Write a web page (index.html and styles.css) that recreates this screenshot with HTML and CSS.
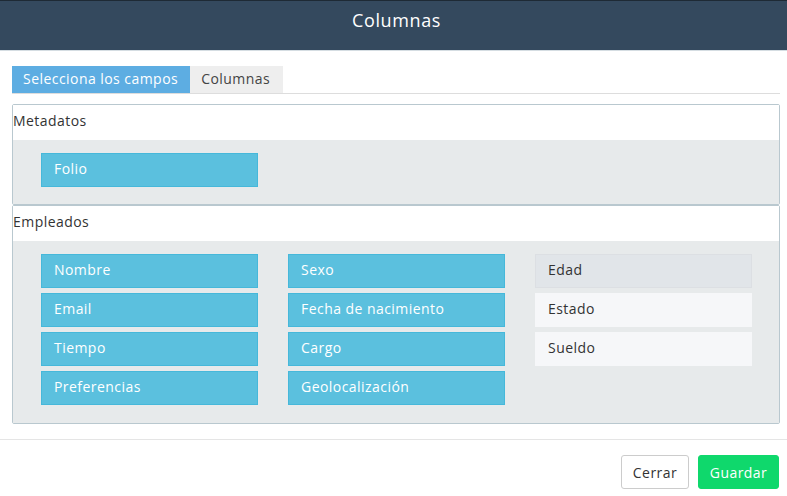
FILE: index.html
```html
<!DOCTYPE html>
<html lang="es">
<head>
<meta charset="utf-8">
<title>Columnas</title>
<link rel="stylesheet" href="styles.css">
</head>
<body>
<div class="modal">
  <header class="modal-header">
    <h1 class="modal-title">Columnas</h1>
  </header>
  <div class="modal-body">
    <ul class="tabs">
      <li class="tab active">Selecciona los campos</li>
      <li class="tab">Columnas</li>
    </ul>
    <section class="panel">
      <div class="panel-heading">Metadatos</div>
      <div class="panel-body">
        <div class="col">
          <div class="field on">Folio</div>
        </div>
      </div>
    </section>
    <section class="panel panel-last">
      <div class="panel-heading">Empleados</div>
      <div class="panel-body">
        <div class="col">
          <div class="field on">Nombre</div>
          <div class="field on">Email</div>
          <div class="field on">Tiempo</div>
          <div class="field on">Preferencias</div>
        </div>
        <div class="col">
          <div class="field on">Sexo</div>
          <div class="field on">Fecha de nacimiento</div>
          <div class="field on">Cargo</div>
          <div class="field on">Geolocalización</div>
        </div>
        <div class="col">
          <div class="field hover">Edad</div>
          <div class="field off">Estado</div>
          <div class="field off">Sueldo</div>
        </div>
      </div>
    </section>
  </div>
  <footer class="modal-footer">
    <button class="btn btn-default">Cerrar</button>
    <button class="btn btn-success">Guardar</button>
  </footer>
</div>
</body>
</html>
```

FILE: styles.css
```css
* { box-sizing: border-box; }
html, body { margin: 0; padding: 0; background: #fff; }
body {
  font-family: "Open Sans", "Liberation Sans", sans-serif;
  font-size: 14px;
  letter-spacing: 0.45px;
  color: #333;
  width: 787px;
  height: 496px;
  overflow: hidden;
}
.modal-header {
  height: 51px;
  background: #34495e;
  border-top: 1px solid #1e2a35;
  border-bottom: 1px solid #d5dde2;
  display: flex;
  align-items: center;
  justify-content: center;
  padding-bottom: 12px;
  padding-left: 6px;
}
.modal-title {
  margin: 0;
  font-size: 18px;
  font-weight: 400;
  color: #fff;
  letter-spacing: 0.6px;
}
.modal-body {
  padding: 15px 7px 15px 12px;
}
.tabs {
  list-style: none;
  margin: 0;
  padding: 0;
  display: flex;
  border-bottom: 1px solid #dddddd;
}
.tab {
  height: 27px;
  line-height: 26px;
  padding: 0 11px;
  background: #eeeeee;
  color: #444;
}
.tab.active {
  background: #5dade2;
  color: #fff;
  padding-right: 12px;
}
.tab + .tab { padding-right: 13px; }
.panel {
  border: 1px solid #b9c8cf;
  border-radius: 2px;
}
.tabs + .panel { margin-top: 10px; }
.panel-heading {
  height: 35px;
  line-height: 32px;
  padding-left: 0;
  background: #fff;
  color: #333;
}
.panel-body {
  background: #e7eaeb;
  padding: 13px 0 17px 28px;
  display: flex;
  gap: 30px;
}
.panel-last .panel-body { padding-bottom: 18px; }
.col {
  width: 217px;
  flex-shrink: 0;
  display: flex;
  flex-direction: column;
  gap: 5px;
}
.field {
  height: 34px;
  line-height: 30px;
  padding-left: 12px;
  border: 1px solid transparent;
}
.field.on {
  background: #5bc0de;
  border-color: #46b8da;
  color: #fff;
}
.field.hover {
  background: #e1e5e9;
  border-color: #dcdfe3;
  color: #333;
}
.field.off {
  background: #f6f7f9;
  border-color: #f6f7f9;
  color: #333;
}
.modal-footer {
  border-top: 1px solid #e5e5e5;
  padding: 15px 8px 0 0;
  display: flex;
  justify-content: flex-end;
  gap: 9px;
}
.btn {
  height: 34px;
  font-family: inherit;
  font-size: 14px;
  letter-spacing: 0.45px;
  border-radius: 3px;
  padding: 0;
  cursor: pointer;
}
.btn-default {
  background: #fff;
  border: 1px solid #cccccc;
  color: #333;
  width: 68px;
}
.btn-success {
  background: #0fd86c;
  border: 1px solid #0fd86c;
  color: #fff;
  width: 81px;
}
```
